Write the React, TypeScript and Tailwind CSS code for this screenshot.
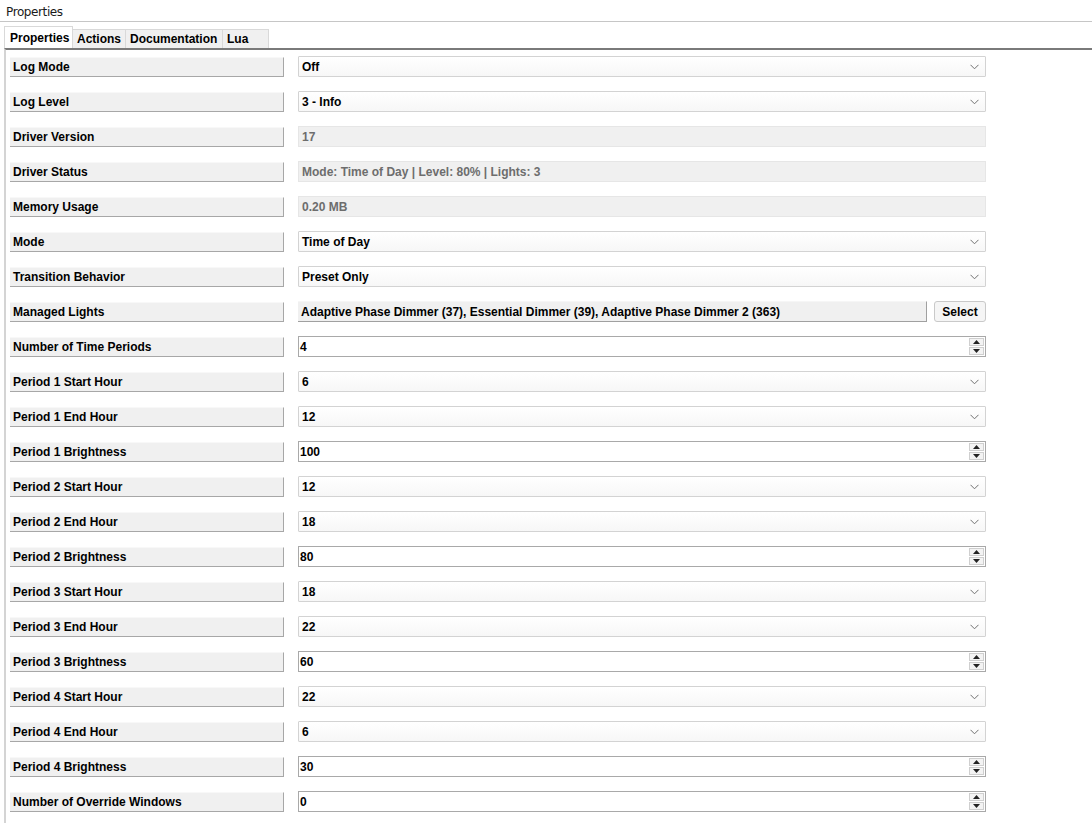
import { ReactNode } from 'react';

type Kind = 'combo' | 'readonly' | 'spin' | 'select';

interface Row {
  label: string;
  value: string;
  kind: Kind;
}

const rows: Row[] = [
  { label: 'Log Mode', value: 'Off', kind: 'combo' },
  { label: 'Log Level', value: '3 - Info', kind: 'combo' },
  { label: 'Driver Version', value: '17', kind: 'readonly' },
  { label: 'Driver Status', value: 'Mode: Time of Day | Level: 80% | Lights: 3', kind: 'readonly' },
  { label: 'Memory Usage', value: '0.20 MB', kind: 'readonly' },
  { label: 'Mode', value: 'Time of Day', kind: 'combo' },
  { label: 'Transition Behavior', value: 'Preset Only', kind: 'combo' },
  {
    label: 'Managed Lights',
    value: 'Adaptive Phase Dimmer (37), Essential Dimmer (39), Adaptive Phase Dimmer 2 (363)',
    kind: 'select',
  },
  { label: 'Number of Time Periods', value: '4', kind: 'spin' },
  { label: 'Period 1 Start Hour', value: '6', kind: 'combo' },
  { label: 'Period 1 End Hour', value: '12', kind: 'combo' },
  { label: 'Period 1 Brightness', value: '100', kind: 'spin' },
  { label: 'Period 2 Start Hour', value: '12', kind: 'combo' },
  { label: 'Period 2 End Hour', value: '18', kind: 'combo' },
  { label: 'Period 2 Brightness', value: '80', kind: 'spin' },
  { label: 'Period 3 Start Hour', value: '18', kind: 'combo' },
  { label: 'Period 3 End Hour', value: '22', kind: 'combo' },
  { label: 'Period 3 Brightness', value: '60', kind: 'spin' },
  { label: 'Period 4 Start Hour', value: '22', kind: 'combo' },
  { label: 'Period 4 End Hour', value: '6', kind: 'combo' },
  { label: 'Period 4 Brightness', value: '30', kind: 'spin' },
  { label: 'Number of Override Windows', value: '0', kind: 'spin' },
];

// tab widths as drawn in the strip
const tabs = [
  { name: 'Properties', w: 'w-[69px]' },
  { name: 'Actions', w: 'w-[53px]' },
  { name: 'Documentation', w: 'w-[97px]' },
  { name: 'Lua', w: 'w-[46px]' },
];

const Chevron = () => (
  <svg width="9" height="6" viewBox="0 0 9 6" className="shrink-0">
    <path d="M0.5 0.8 L4.5 4.8 L8.5 0.8" fill="none" stroke="#707070" strokeWidth="1" />
  </svg>
);

const SpinButtons = () => (
  <div className="flex flex-col gap-px pr-px">
    <div className="w-[15px] h-[8px] bg-[#f3f3f3] border border-[#cfcfcf] flex items-center justify-center">
      <svg width="7" height="4" viewBox="0 0 7 4">
        <path d="M0 4 L3.5 0 L7 4 Z" fill="#222" />
      </svg>
    </div>
    <div className="w-[15px] h-[8px] bg-[#f3f3f3] border border-[#cfcfcf] flex items-center justify-center">
      <svg width="7" height="4" viewBox="0 0 7 4">
        <path d="M0 0 L3.5 4 L7 0 Z" fill="#222" />
      </svg>
    </div>
  </div>
);

const Editor = ({ row }: { row: Row }): ReactNode => {
  if (row.kind === 'combo') {
    return (
      <div className="w-[688px] h-[21px] border border-[#d3d3d3] rounded-[1px] bg-gradient-to-b from-[#ffffff] to-[#f7f7f7] flex items-center pl-[3px] pr-[6px] justify-between">
        <span>{row.value}</span>
        <Chevron />
      </div>
    );
  }
  if (row.kind === 'readonly') {
    return (
      <div className="w-[688px] h-[21px] border border-[#e6e6e6] bg-[#f0f0f0] flex items-center pl-[3px] text-[#6d6d6d]">
        <span>{row.value}</span>
      </div>
    );
  }
  if (row.kind === 'spin') {
    return (
      <div className="w-[688px] h-[21px] border border-[#a9a9a9] bg-white flex items-center pl-[1px] justify-between">
        <span>{row.value}</span>
        <SpinButtons />
      </div>
    );
  }
  return (
    <div className="w-[688px] h-[21px] flex items-center">
      <div className="w-[629px] h-[21px] bg-[#f0f0f0] border-b border-r border-[#a0a0a0] border-t border-t-[#f6f6f6] flex items-center pl-[3px] whitespace-nowrap overflow-hidden">
        {row.value}
      </div>
      <div className="ml-[7px] w-[52px] h-[21px] rounded-[3px] border border-[#c9c9c9] bg-[#f5f5f5] flex items-center justify-center">
        Select
      </div>
    </div>
  );
};

export default function App() {
  return (
    <div className="w-[1092px] h-[823px] overflow-hidden bg-white text-black font-['Liberation_Sans',Arial,sans-serif]">
      <div className="h-[22px] border-b border-[#c6c6c6] flex items-center pl-[6px] pt-[2px] text-[12px] text-[#1a1a1a] font-['DejaVu_Sans',sans-serif] tracking-[-0.4px]">
        Properties
      </div>
      <div className="pl-[4px] flex items-end h-[26px]">
        {tabs.map((t, i) =>
          i === 0 ? (
            <div
              key={t.name}
              className={`${t.w} h-[22px] bg-white border border-b-0 border-[#d9d9d9] flex items-center pl-[5px] font-bold text-[12px]`}
            >
              {t.name}
            </div>
          ) : (
            <div
              key={t.name}
              className={`${t.w} h-[19px] bg-[#f0f0f0] border border-l-0 border-b-0 border-[#d9d9d9] flex items-center pl-[4px] font-bold text-[12px]`}
            >
              {t.name}
            </div>
          )
        )}
        <div className="flex-1" />
      </div>
      <div className="ml-[4px] border-t-2 border-l-2 border-t-[#7a7a7a] border-l-[#d4d4d4] h-full">
        <div className="pt-[6px] pl-[4px] flex flex-col gap-[14px]">
          {rows.map((r) => (
            <div key={r.label} className="flex items-center h-[21px] text-[12px] font-bold">
              <div className="w-[274px] h-[20px] bg-[#f0f0f0] border-b border-r border-[#a7a7a7] border-t border-t-[#f8f8f8] flex items-center pl-[3px]">
                {r.label}
              </div>
              <div className="ml-[14px]">
                <Editor row={r} />
              </div>
            </div>
          ))}
        </div>
      </div>
    </div>
  );
}
